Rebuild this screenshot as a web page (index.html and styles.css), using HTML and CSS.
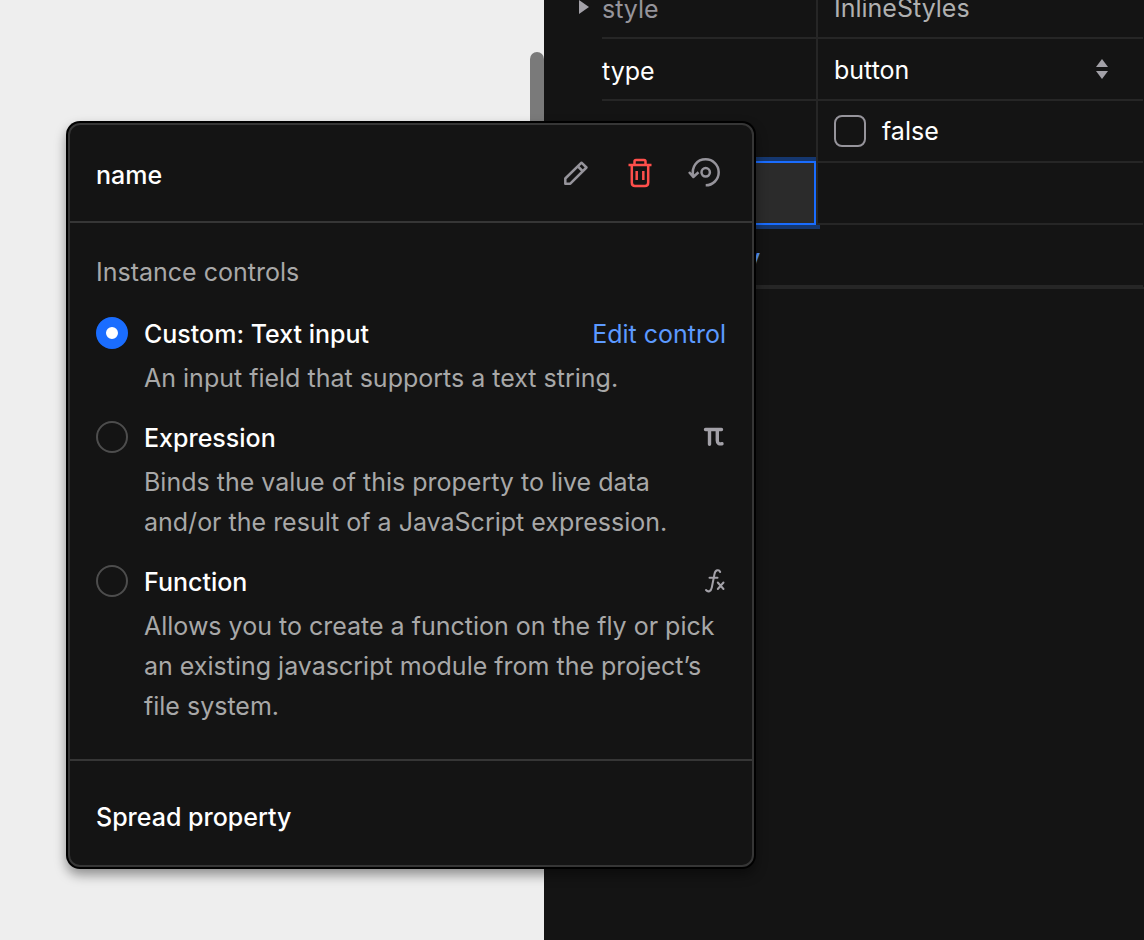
FILE: index.html
```html
<!DOCTYPE html>
<html lang="en">
<head>
    <meta charset="UTF-8">
    <meta name="viewport" content="width=device-width, initial-scale=1.0">
    <title>Properties</title>
    <link rel="stylesheet" href="styles.css">
</head>
<body>
    <div class="editor">
        <main class="canvas">
            <div class="scroll-thumb"></div>
        </main>

        <aside class="panel">
            <div class="props">
                <div class="prop prop-cut">
                    <div class="prop-name muted">
                        <svg class="caret" viewBox="0 0 10 14" aria-hidden="true"><path d="M0 0L10 7L0 14Z"/></svg>
                        style
                    </div>
                    <div class="prop-value type-hint">InlineStyles</div>
                </div>
                <div class="prop">
                    <label class="prop-name" for="prop-type">type</label>
                    <div class="prop-value">
                        <select id="prop-type" class="prop-select">
                            <option>button</option>
                        </select>
                        <svg class="arrows" viewBox="0 0 12 20" aria-hidden="true"><path d="M6 0L12 8H0ZM0 12H12L6 20Z"/></svg>
                    </div>
                </div>
                <div class="prop">
                    <div class="prop-name"></div>
                    <div class="prop-value">
                        <label class="check"><input type="checkbox" class="checkbox">false</label>
                    </div>
                </div>
                <div class="prop">
                    <input type="text" class="name-input" aria-label="Property name">
                    <div class="prop-value"></div>
                </div>
                <div class="prop">
                    <button type="button" class="add-button">Add property</button>
                </div>
            </div>
        </aside>
    </div>

    <div class="popover" role="dialog" aria-labelledby="popover-title">
        <header class="popover-header">
            <h1 id="popover-title" class="popover-title">name</h1>
            <div class="actions">
                <button type="button" class="icon-button" aria-label="Rename">
                    <svg class="icon" viewBox="0 0 32 32"><path d="M5.300 26.700V21.500L21.500 5.700L26.500 10.500L10.300 26.700ZM17.500 9L23 14.500"/></svg>
                </button>
                <button type="button" class="icon-button danger" aria-label="Delete">
                    <svg class="icon" viewBox="0 0 32 32"><path d="M4.500 8H27.500M10.500 8V4.500Q10.500 3 12 3H20Q21.500 3 21.500 4.500V8M7.800 8V25.500Q7.800 29 11 29H21Q24.200 29 24.200 25.500V8M12.700 14V23M19.300 14V23"/></svg>
                </button>
                <button type="button" class="icon-button" aria-label="Reset">
                    <svg class="icon" viewBox="0 0 32 32"><path d="M5.300 19.500C3 9.500 9 2.300 17.700 2.300A13 13 0 0 1 17.700 28.300M1 15L5.300 20L10.500 15.300"/><circle cx="17.700" cy="15.300" r="4.200"/></svg>
                </button>
            </div>
        </header>

        <section class="controls">
            <h2 class="controls-title">Instance controls</h2>

            <div class="option">
                <input type="radio" name="control" id="control-custom" class="radio" checked>
                <div class="option-head">
                    <label class="option-title" for="control-custom">Custom: Text input</label>
                    <button type="button" class="link-button">Edit control</button>
                </div>
                <p class="option-text">An input field that supports a text string.</p>
            </div>

            <div class="option">
                <input type="radio" name="control" id="control-expression" class="radio">
                <div class="option-head">
                    <label class="option-title" for="control-expression">Expression</label>
                    <svg class="glyph glyph-bold" viewBox="0 0 24 24" aria-hidden="true"><path d="M3.500 3.500H19.500M7.500 4V18.200M15.300 4V14.500Q15.300 18.500 20 17.800"/></svg>
                </div>
                <p class="option-text">Binds the value of this property to live data and/or the result of a JavaScript expression.</p>
            </div>

            <div class="option">
                <input type="radio" name="control" id="control-function" class="radio">
                <div class="option-head">
                    <label class="option-title" for="control-function">Function</label>
                    <svg class="glyph" viewBox="0 0 24 24" aria-hidden="true"><path d="M18.200 2C17 -0.800 13.300 -0.300 12.500 4L9.800 17.500C9 21.800 6 22.300 4 20M7.500 7.700H15.500M15.800 12.500L21.500 19M21.500 12.500L15.800 19"/></svg>
                </div>
                <p class="option-text">Allows you to create a function on the fly or pick an existing javascript module from the project’s file system.</p>
            </div>
        </section>

        <footer class="popover-footer">
            <button type="button" class="spread-button">Spread property</button>
        </footer>
    </div>
</body>
</html>
```

FILE: styles.css
```css
* {
    box-sizing: border-box;
}

body {
    margin: 0;
    font-family: Inter, "Liberation Sans", sans-serif;
    font-size: 25px;
    line-height: 40px;
    color: #fff;
    background: #141414;
}

h1, h2, p {
    margin: 0;
    font-size: inherit;
    font-weight: 400;
}

button, input, select {
    margin: 0;
    padding: 0;
    border: 0;
    background: none;
    color: inherit;
    font: inherit;
}

button {
    cursor: pointer;
}

.editor {
    display: grid;
    grid-template-columns: 1fr 600px;
    min-height: 100vh;
}

.canvas {
    display: flex;
    justify-content: flex-end;
    padding-top: 52px;
    background: #eee;
}

.scroll-thumb {
    width: 14px;
    height: 600px;
    border-radius: 7px;
    background: #7a7a7a;
}

/* property panel */

.panel {
    background: #141414;
    overflow: hidden;
}

.props {
    padding-right: 1px;
    border-bottom: 2px solid #262626;
}

.prop {
    display: grid;
    grid-template-columns: 214px 1fr;
    height: 62px;
    margin-left: 58px;
}

.prop-cut {
    margin-top: -23px;
}

.prop:last-child {
    margin-left: 0;
    padding-left: 58px;
    border-bottom: 2px solid #262626;
}

.prop-name,
.prop-value {
    display: flex;
    align-items: center;
    border-bottom: 2px solid #262626;
}

.prop-name {
    position: relative;
    padding-top: 4px;
}

.prop-value {
    position: relative;
    z-index: 2;
    padding: 0 35px 0 16px;
    border-left: 2px solid #262626;
    background: #141414;
}

.muted {
    color: #96949b;
}

.prop-value.type-hint {
    padding-top: 2px;
    color: #b0b0b0;
}

.caret {
    position: absolute;
    left: -23px;
    top: 23px;
    width: 10px;
    height: 14px;
    fill: #a3a1a8;
}

.prop-select {
    flex: 1;
    padding-top: 2px;
    appearance: none;
    outline: none;
}

.arrows {
    width: 12px;
    height: 20px;
    fill: #a3a1a8;
}

.check {
    display: flex;
    align-items: center;
    gap: 16px;
}

.checkbox {
    appearance: none;
    width: 32px;
    height: 32px;
    border: 2px solid #96949b;
    border-radius: 8px;
}

.name-input {
    position: relative;
    z-index: 1;
    width: 100%;
    height: 64px;
    margin-top: -2px;
    border: 2px solid #1a6dff;
    background: #2b2b2b;
    box-shadow: 0 0 0 4px #15376f;
    outline: none;
}

.add-button {
    padding-top: 6px;
    color: #5c9aff;
    font-weight: 500;
    text-align: left;
    white-space: nowrap;
}

/* popover */

.popover {
    position: absolute;
    z-index: 10;
    top: 123px;
    left: 68px;
    width: 686px;
    border: 2px solid #363636;
    border-radius: 12px;
    background: #141414;
    box-shadow: 0 0 0 2px #000, 0 6px 12px 2px rgba(0, 0, 0, 0.4);
}

.popover-header {
    display: flex;
    align-items: center;
    justify-content: space-between;
    padding: 26px 32px 26px 26px;
    border-bottom: 2px solid #363636;
}

.popover-title,
.option-title,
.spread-button {
    font-weight: 500;
}

.popover-title {
    padding-top: 4px;
}

.actions {
    display: flex;
    gap: 32px;
}

.icon-button {
    display: flex;
    color: #96949b;
}

.icon-button.danger {
    color: #ff4f4b;
}

.icon {
    width: 32px;
    height: 32px;
    fill: none;
    stroke: currentColor;
    stroke-width: 2.5;
    stroke-linejoin: round;
}

.controls {
    display: flex;
    flex-direction: column;
    gap: 20px;
    padding: 29px 26px 33px;
    border-bottom: 2px solid #363636;
}

.controls-title {
    margin-bottom: 2px;
    color: #a8a8a8;
}

.option {
    display: grid;
    grid-template-columns: 32px 1fr;
    gap: 4px 16px;
}

.radio {
    appearance: none;
    width: 32px;
    height: 32px;
    margin-top: 3px;
    border: 2px solid #4d4d4d;
    border-radius: 50%;
}

.radio:checked {
    border: 10px solid #1a6dff;
    background: #fff;
}

.option-head {
    display: flex;
    align-items: center;
    justify-content: space-between;
}

.link-button {
    color: #5c9aff;
}

.option-text {
    grid-column: 2;
    color: #a8a8a8;
}

.glyph {
    width: 24px;
    height: 24px;
    fill: none;
    stroke: #a3a1a8;
    stroke-width: 2;
    stroke-linecap: round;
    overflow: visible;
}

.glyph-bold {
    stroke-width: 3.4;
}

.popover-footer {
    padding: 36px 26px 28px;
}

.spread-button {
    display: block;
}
```
